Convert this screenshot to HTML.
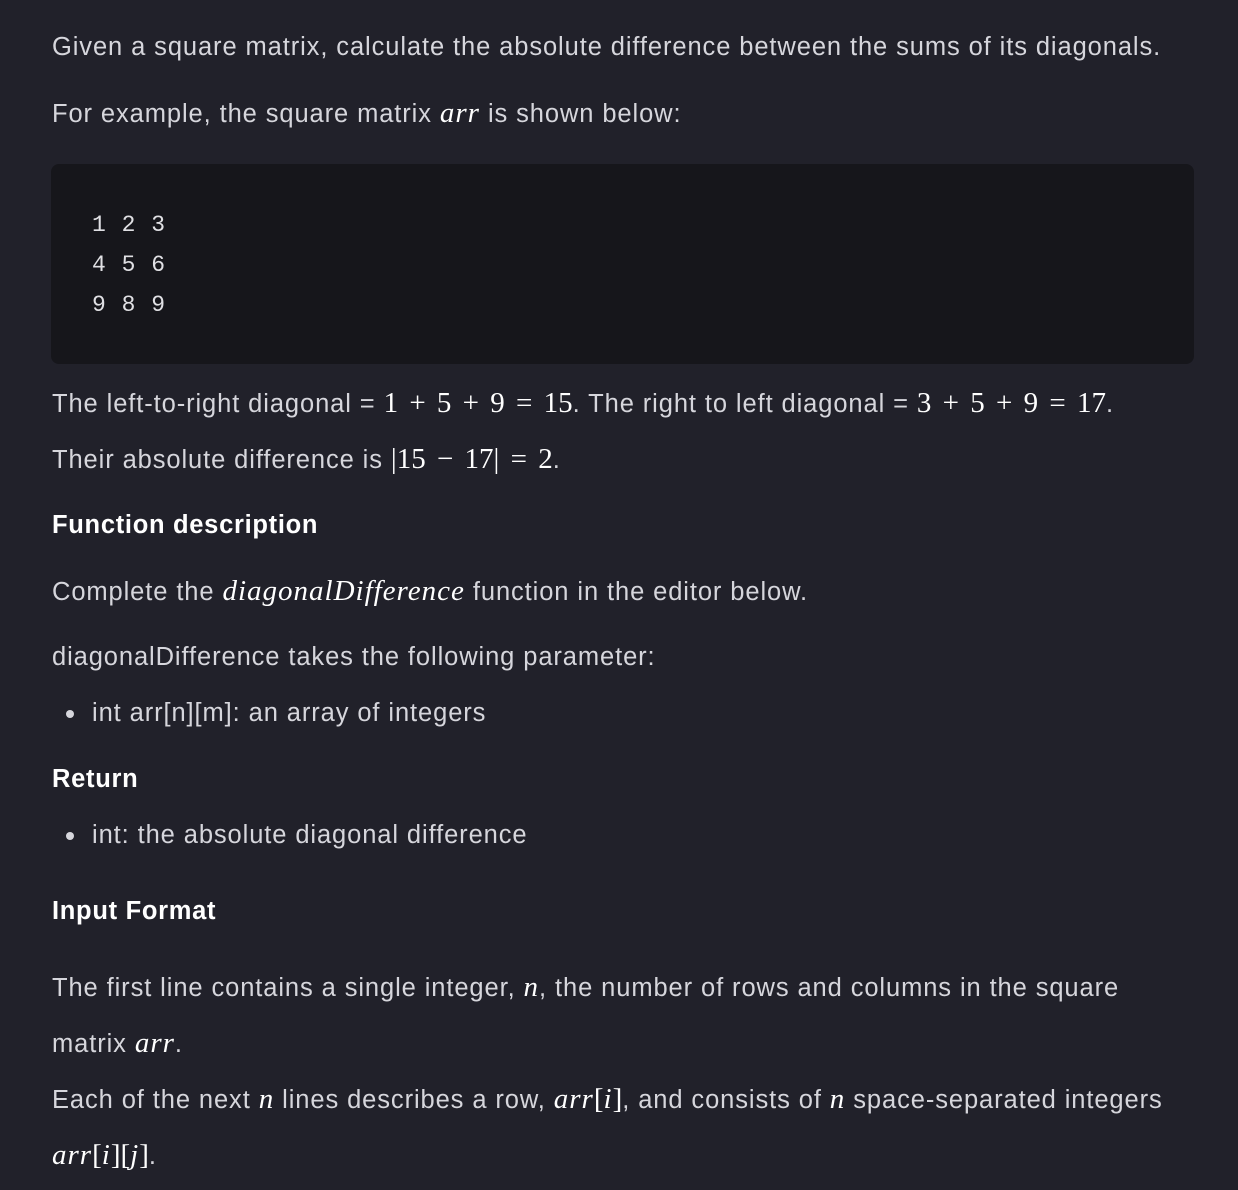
<!DOCTYPE html>
<html><head><meta charset="utf-8"><style>
html,body{margin:0;padding:0}
body{width:1238px;height:1190px;background:#21212a;position:relative;overflow:hidden;font-family:"Liberation Sans",sans-serif;color:#d6d6dc;font-size:25.5px;letter-spacing:0.9px}
.l{position:absolute;left:52px;white-space:nowrap;line-height:30px;height:30px}
.m{font-family:"Liberation Serif",serif;color:#fff;font-size:29px;letter-spacing:0;word-spacing:4px}
.mi{font-family:"Liberation Serif",serif;font-style:italic;color:#fff;font-size:29px;letter-spacing:1px}
.h{font-weight:bold;color:#fff;letter-spacing:0.7px}
.code{position:absolute;left:51px;top:164px;width:1143px;height:200px;background:#16161b;border-radius:8px}
.c{position:absolute;left:92px;font-family:"Liberation Mono",monospace;font-size:23px;color:#e0e0e4;line-height:30px;letter-spacing:1px}
.b{position:absolute;left:66px;width:8px;height:8px;border-radius:50%;background:#d6d6dc}
</style></head><body>
<div class="l" style="top:32px">Given a square matrix, calculate the absolute difference between the sums of its diagonals.</div>
<div class="l" style="top:98px">For example, the square matrix <span class="mi">arr</span> is shown below:</div>
<div class="code"></div>
<div class="c" style="top:210px">1 2 3</div>
<div class="c" style="top:250px">4 5 6</div>
<div class="c" style="top:290px">9 8 9</div>
<div class="l" style="top:388px">The left-to-right diagonal = <span class="m">1 + 5 + 9 = 15</span>. The right to left diagonal = <span class="m">3 + 5 + 9 = 17</span>.</div>
<div class="l" style="top:444px">Their absolute difference is <span class="m">|15 − 17| = 2</span>.</div>
<div class="l h" style="top:510px">Function description</div>
<div class="l" style="top:576px">Complete the <span class="mi">diagonalDifference</span> function in the editor below.</div>
<div class="l" style="top:642px">diagonalDifference takes the following parameter:</div>
<div class="b" style="top:710px"></div>
<div class="l" style="top:698px;left:92px">int arr[n][m]: an array of integers</div>
<div class="l h" style="top:764px">Return</div>
<div class="b" style="top:832px"></div>
<div class="l" style="top:820px;left:92px">int: the absolute diagonal difference</div>
<div class="l h" style="top:896px">Input Format</div>
<div class="l" style="top:972px">The first line contains a single integer, <span class="mi">n</span>, the number of rows and columns in the square</div>
<div class="l" style="top:1028px">matrix <span class="mi">arr</span>.</div>
<div class="l" style="top:1084px">Each of the next <span class="mi">n</span> lines describes a row, <span class="mi">arr</span><span class="m">[</span><span class="mi">i</span><span class="m">]</span>, and consists of <span class="mi">n</span> space-separated integers</div>
<div class="l" style="top:1140px"><span class="mi">arr</span><span class="m">[</span><span class="mi">i</span><span class="m">][</span><span class="mi">j</span><span class="m">]</span>.</div>
</body></html>
